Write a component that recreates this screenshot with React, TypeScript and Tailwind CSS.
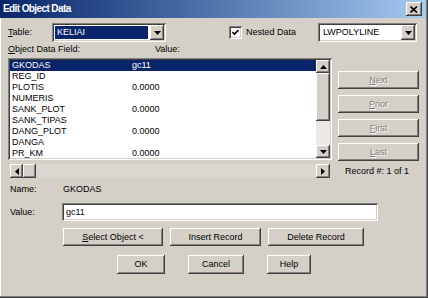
import React from "react";

const raised =
  "bg-[#d4d0c8] shadow-[inset_-1px_-1px_#404040,inset_1px_1px_#ffffff,inset_-2px_-2px_#808080,inset_2px_2px_#d4d0c8]";
const sunken =
  "shadow-[inset_1px_1px_#808080,inset_-1px_-1px_#ffffff,inset_2px_2px_#404040,inset_-2px_-2px_#d4d0c8]";

function Tri({ dir }: { dir: "up" | "down" | "left" | "right" }) {
  const pts =
    dir === "down"
      ? "0,0 7,0 3.5,4"
      : dir === "up"
      ? "0,4 7,4 3.5,0"
      : dir === "left"
      ? "4,0 4,7 0,3.5"
      : "0,0 0,7 4,3.5";
  const w = dir === "up" || dir === "down" ? 7 : 4;
  const h = dir === "up" || dir === "down" ? 4 : 7;
  return (
    <svg width={w} height={h} viewBox={`0 0 ${w} ${h}`}>
      <polygon points={pts} fill="#000" />
    </svg>
  );
}

function Combo({ text, selected, width }: { text: string; selected?: boolean; width: string }) {
  return (
    <div className={`${width} h-[19px] bg-white p-[2px] flex ${sunken}`}>
      <div className="flex-1 flex items-center pl-[1px] pr-[2px] py-[1px]">
        <div
          className={`flex-1 h-full flex items-center pl-[2px] ${
            selected ? "bg-[#0a246a] text-white" : "text-black"
          }`}
        >
          {text}
        </div>
      </div>
      <div className={`w-[14px] h-full flex items-center justify-center ${raised}`}>
        <Tri dir="down" />
      </div>
    </div>
  );
}

function Btn({
  children,
  className = "",
  disabled,
}: {
  children: React.ReactNode;
  className?: string;
  disabled?: boolean;
}) {
  return (
    <div
      className={`${raised} flex items-center justify-center ${
        disabled ? "text-[#808080] [text-shadow:1px_1px_#ffffff]" : "text-black"
      } ${className}`}
    >
      {children}
    </div>
  );
}

const rows: [string, string][] = [
  ["GKODAS", "gc11"],
  ["REG_ID", ""],
  ["PLOTIS", "0.0000"],
  ["NUMERIS", ""],
  ["SANK_PLOT", "0.0000"],
  ["SANK_TIPAS", ""],
  ["DANG_PLOT", "0.0000"],
  ["DANGA", ""],
  ["PR_KM", "0.0000"],
];

export default function App() {
  return (
    <div
      className="w-[428px] h-[298px] bg-[#d4d0c8] flex flex-col text-[9px] leading-[11px] text-black shadow-[inset_-1px_-1px_#404040,inset_-2px_-2px_#808080,inset_1px_0_#ffffff]"
      style={{ fontFamily: '"Liberation Sans", Arial, sans-serif' }}
    >
      {/* Title bar */}
      <div className="h-[18px] mr-[2px] flex items-center pl-[3px] pr-[4px] bg-gradient-to-r from-[#0a246a] to-[#a6caf0]">
        <span className="text-white font-bold text-[10px] leading-[12px] tracking-[-0.6px]">Edit Object Data</span>
        <div className={`ml-auto w-[16px] h-[14px] flex items-center justify-center ${raised}`}>
          <svg width="8" height="7" viewBox="0 0 8 7">
            <path d="M0.5 0.5 L7 6.5 M7 0.5 L0.5 6.5" stroke="#000" strokeWidth="1.6" />
          </svg>
        </div>
      </div>

      {/* Row 1 */}
      <div className="mt-[5px] h-[19px] flex items-center pl-[8px]">
        <span className="w-[44px]">
          <span className="underline">T</span>able:
        </span>
        <Combo text="KELIAI" selected width="w-[114px]" />
        <div className={`ml-[63px] w-[13px] h-[13px] bg-white flex items-center justify-center ${sunken}`}>
          <svg width="7" height="7" viewBox="0 0 7 7">
            <path d="M0.5 3 L2.5 5 L6.5 1" stroke="#000" strokeWidth="1.6" fill="none" />
          </svg>
        </div>
        <span className="ml-[4px]">Nested Data</span>
        <div className="ml-auto mr-[11px]">
          <Combo text="LWPOLYLINE" width="w-[99px]" />
        </div>
      </div>

      {/* Row 2 headers */}
      <div className="h-[12px] flex items-center pl-[8px] mt-[1px]">
        <span className="w-[147px]">
          <span className="underline">O</span>bject Data Field:
        </span>
        <span>Value:</span>
      </div>

      {/* List + buttons */}
      <div className="mt-[3px] flex pl-[8px]">
        <div className={`w-[324px] h-[102px] bg-white p-[2px] flex ${sunken}`}>
          <div className="flex-1 flex flex-col">
            {rows.map(([k, v], i) => (
              <div
                key={k}
                className={`h-[11px] grid grid-cols-[120px_1fr] pl-[2px] ${
                  i === 0 ? "bg-[#0a246a] text-white" : "text-black"
                }`}
              >
                <span>{k}</span>
                <span>{v}</span>
              </div>
            ))}
          </div>
          <div className="w-[14px] h-full flex flex-col">
            <div className={`h-[13px] flex items-center justify-center ${raised}`}>
              <Tri dir="up" />
            </div>
            <div className={`h-[48px] ${raised}`} />
            <div className="flex-1 bg-[#eae8e4]" />
            <div className={`h-[13px] flex items-center justify-center ${raised}`}>
              <Tri dir="down" />
            </div>
          </div>
        </div>
        <div className="ml-[6px] pt-[13px] flex flex-col gap-[6px]">
          <Btn disabled className="w-[81px] h-[18px]">
            <span>
              <span className="underline">N</span>ext
            </span>
          </Btn>
          <Btn disabled className="w-[81px] h-[18px]">
            <span>
              <span className="underline">P</span>rior
            </span>
          </Btn>
          <Btn disabled className="w-[81px] h-[18px]">
            <span>
              <span className="underline">F</span>irst
            </span>
          </Btn>
          <Btn disabled className="w-[81px] h-[18px]">
            <span>
              <span className="underline">L</span>ast
            </span>
          </Btn>
        </div>
      </div>

      {/* Horizontal scroll + record */}
      <div className="mt-[3px] h-[14px] flex items-center pl-[10px]">
        <div className="w-[320px] h-[14px] flex bg-[#dad7d0]">
          <div className={`w-[13px] h-full flex items-center justify-center ${raised}`}>
            <Tri dir="left" />
          </div>
          <div className={`w-[13px] h-full ${raised}`} />
          <div className="flex-1" />
          <div className={`w-[14px] h-full flex items-center justify-center ${raised}`}>
            <Tri dir="right" />
          </div>
        </div>
        <span className="ml-[15px]">Record #: 1 of 1</span>
      </div>

      {/* Name */}
      <div className="mt-[5px] h-[12px] flex items-center pl-[10px]">
        <span className="w-[53px]">Name:</span>
        <span>GKODAS</span>
      </div>

      {/* Value */}
      <div className="mt-[8px] h-[18px] flex items-center pl-[10px]">
        <span className="w-[52px]">Value:</span>
        <div className={`w-[316px] h-[18px] bg-white flex items-center pl-[4px] ${sunken}`}>gc11</div>
      </div>

      {/* Buttons row 1 */}
      <div className="mt-[7px] h-[18px] flex pl-[63px] gap-[7px]">
        <Btn className="w-[100px] h-[18px]">
          <span>
            <span className="underline">S</span>elect Object &lt;
          </span>
        </Btn>
        <Btn className="w-[91px] h-[18px]">Insert Record</Btn>
        <Btn className="w-[96px] h-[18px]">Delete Record</Btn>
      </div>

      {/* Buttons row 2 */}
      <div className="mt-[9px] h-[19px] flex pl-[117px]">
        <Btn className="w-[48px] h-[19px]">OK</Btn>
        <Btn className="ml-[23px] w-[56px] h-[19px]">Cancel</Btn>
        <Btn className="ml-[23px] w-[44px] h-[19px]">Help</Btn>
      </div>
    </div>
  );
}
